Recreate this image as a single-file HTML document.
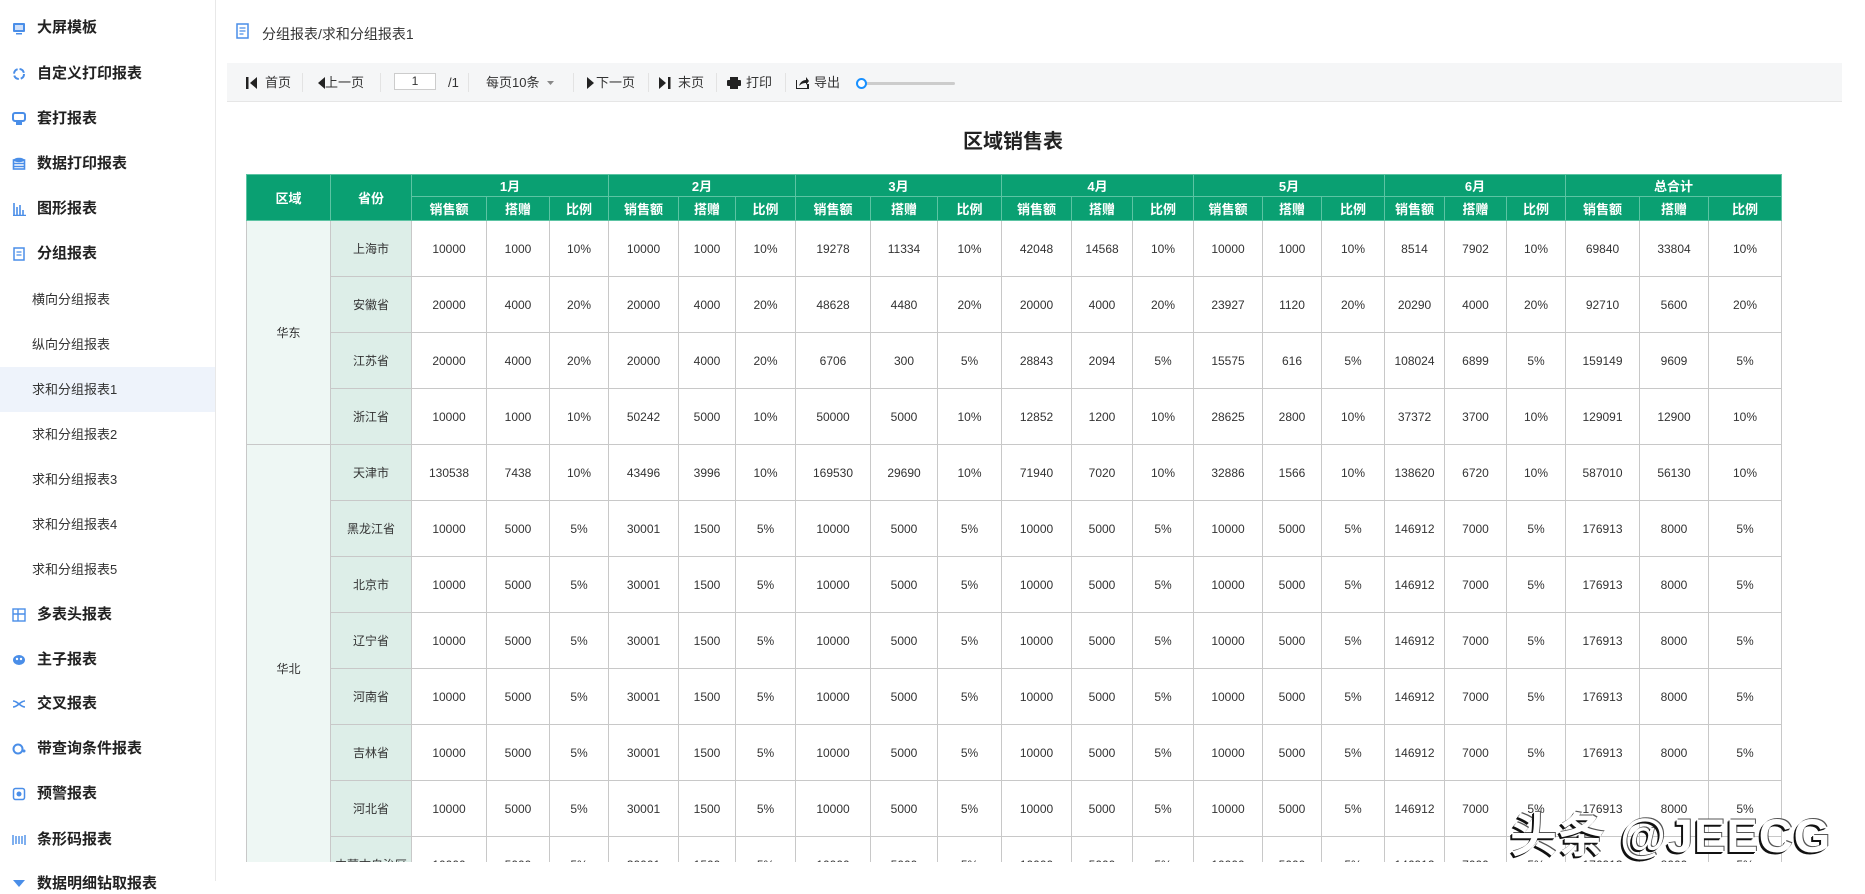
<!DOCTYPE html>
<html><head><meta charset="utf-8"><style>
*{margin:0;padding:0;box-sizing:border-box}
body{width:1865px;height:881px;overflow:hidden;background:#fff;font-family:"Liberation Sans","Noto Sans CJK SC",sans-serif;color:#333;position:relative}
.side{position:absolute;left:0;top:0;width:216px;height:881px;border-right:1px solid #e8e8e8;background:#fff}
.mi{position:absolute;left:0;width:215px;height:20px;font-size:15px;font-weight:bold;color:#222;line-height:20px}
.mi .ic{position:absolute;left:12px;top:3px;width:14px;height:14px}
.mi span{position:absolute;left:37px}
.si{position:absolute;left:0;width:215px;height:45px;font-size:13px;color:#333;line-height:45px;padding-left:32px}
.sel{background:#eef3fb}
.bc{position:absolute;left:262px;top:24px;font-size:14px;color:#333}
.tb{position:absolute;left:227px;top:63px;width:1615px;height:39px;background:#f5f6f7;border-bottom:1px solid #e6e6e6;font-size:13px;color:#333}
.tb .t{position:absolute;top:11px;line-height:17px}
.tb .sep{position:absolute;top:10px;width:1px;height:19px;background:#e3e3e3}
.title{position:absolute;left:0;width:2026px;top:125px;text-align:center;font-size:20px;font-weight:bold;color:#222}
.wrap{position:absolute;left:246px;top:174px;width:1540px;height:688px;overflow:hidden}
table{border-collapse:collapse;table-layout:fixed;width:1535px;font-size:12px}
td,th{border:1px solid #c8c8c8;text-align:center;color:#333;font-weight:normal}
th{background:#0aa072;color:#fff;font-weight:bold;font-size:13px;border-color:#5cc4a3}
.h1 th{height:22px}.h2 th{height:24px}
td{height:56px}
.r{background:#eef7f4}.p{background:#ddeee8}
.wm{position:absolute;left:1510px;top:797px;font-size:47px;color:#fff;font-weight:bold;letter-spacing:1px;text-shadow:-2px 2px 0 #111,-1px 1px 0 #111,1px -1px 0 #555}
</style></head><body>
<div class="side">
<div class="mi" style="top:18px"><svg class="ic" viewBox="0 0 14 14"><rect x="1" y="2" width="12" height="9" rx="1" fill="#4a8ee8"/><rect x="3" y="4" width="8" height="5" fill="#cfe0fa"/><rect x="4" y="12" width="6" height="1.5" fill="#4a8ee8"/></svg><span>大屏模板</span></div>
<div class="mi" style="top:64px"><svg class="ic" viewBox="0 0 14 14"><circle cx="7" cy="7" r="5" fill="none" stroke="#4a8ee8" stroke-width="2" stroke-dasharray="6 2"/></svg><span>自定义打印报表</span></div>
<div class="mi" style="top:109px"><svg class="ic" viewBox="0 0 14 14"><rect x="1" y="1" width="12" height="8" rx="2" fill="none" stroke="#4a8ee8" stroke-width="2"/><rect x="4" y="8" width="6" height="5" fill="#4a8ee8"/></svg><span>套打报表</span></div>
<div class="mi" style="top:154px"><svg class="ic" viewBox="0 0 14 14"><ellipse cx="7" cy="3" rx="5.5" ry="2.2" fill="#4a8ee8"/><rect x="1.5" y="3" width="11" height="9" fill="none" stroke="#4a8ee8" stroke-width="1.6"/><path d="M1.5 6.5h11M1.5 9.5h11" stroke="#4a8ee8" stroke-width="1.4"/></svg><span>数据打印报表</span></div>
<div class="mi" style="top:199px"><svg class="ic" viewBox="0 0 14 14"><path d="M2 1v12M5 5v8M8 3v10M11 8v5M1 13.5h13" stroke="#4a8ee8" stroke-width="1.6"/></svg><span>图形报表</span></div>
<div class="mi" style="top:244px"><svg class="ic" viewBox="0 0 14 14"><rect x="2" y="1" width="10" height="12" fill="none" stroke="#4a8ee8" stroke-width="1.5"/><path d="M4.5 5h5M4.5 8h5" stroke="#4a8ee8" stroke-width="1.3"/></svg><span>分组报表</span></div>
<div class="si" style="top:277px">横向分组报表</div>
<div class="si" style="top:322px">纵向分组报表</div>
<div class="si sel" style="top:367px">求和分组报表1</div>
<div class="si" style="top:412px">求和分组报表2</div>
<div class="si" style="top:457px">求和分组报表3</div>
<div class="si" style="top:502px">求和分组报表4</div>
<div class="si" style="top:547px">求和分组报表5</div>
<div class="mi" style="top:605px"><svg class="ic" viewBox="0 0 14 14"><rect x="1" y="1" width="12" height="12" fill="none" stroke="#4a8ee8" stroke-width="1.4"/><path d="M1 6h12M6 1v12" stroke="#4a8ee8" stroke-width="1.4"/></svg><span>多表头报表</span></div>
<div class="mi" style="top:650px"><svg class="ic" viewBox="0 0 14 14"><ellipse cx="7" cy="7" rx="6" ry="5" fill="#4a8ee8"/><circle cx="5" cy="6" r="1.2" fill="#fff"/><circle cx="9" cy="6" r="1.2" fill="#fff"/></svg><span>主子报表</span></div>
<div class="mi" style="top:694px"><svg class="ic" viewBox="0 0 14 14"><path d="M1 4c5 0 7 6 12 6M1 10c5 0 7-6 12-6" fill="none" stroke="#4a8ee8" stroke-width="1.6"/></svg><span>交叉报表</span></div>
<div class="mi" style="top:739px"><svg class="ic" viewBox="0 0 14 14"><circle cx="6" cy="7" r="4.5" fill="none" stroke="#4a8ee8" stroke-width="2"/><circle cx="12" cy="9" r="1.5" fill="#4a8ee8"/></svg><span>带查询条件报表</span></div>
<div class="mi" style="top:784px"><svg class="ic" viewBox="0 0 14 14"><rect x="1.5" y="1.5" width="11" height="11" rx="2" fill="none" stroke="#4a8ee8" stroke-width="1.5"/><circle cx="7" cy="7" r="2.5" fill="#4a8ee8"/></svg><span>预警报表</span></div>
<div class="mi" style="top:830px"><svg class="ic" viewBox="0 0 14 14"><path d="M1 2v10M4 3v8M7 3v8M10 3v8M13 2v10" stroke="#4a8ee8" stroke-width="1.4"/></svg><span>条形码报表</span></div>
<div class="mi" style="top:874px"><svg class="ic" viewBox="0 0 14 14"><path d="M1 3h12L7 10z" fill="#4a8ee8"/></svg><span>数据明细钻取报表</span></div>
</div>
<svg style="position:absolute;left:236px;top:23px" width="14" height="17" viewBox="0 0 14 17"><rect x="1" y="1" width="11" height="14" fill="none" stroke="#4a8ee8" stroke-width="1.5"/><path d="M3.5 5h6M3.5 8h6M3.5 11h4" stroke="#4a8ee8" stroke-width="1.2"/></svg>
<div class="bc">分组报表/求和分组报表1</div>
<div class="tb">
<svg style="position:absolute;left:19px;top:14px" width="12" height="12"><rect x="0" y="0" width="2.5" height="12" fill="#222"/><path d="M11 0v12L4 6z" fill="#222"/></svg>
<span class="t" style="left:38px">首页</span><div class="sep" style="left:75px"></div>
<svg style="position:absolute;left:91px;top:14px" width="8" height="12"><path d="M7 0v12L0 6z" fill="#222"/></svg>
<span class="t" style="left:98px">上一页</span><div class="sep" style="left:153px"></div>
<div style="position:absolute;left:167px;top:10px;width:42px;height:17px;background:#fff;border:1px solid #ccc;font-size:12px;text-align:center;line-height:15px">1</div>
<span class="t" style="left:221px">/1</span><div class="sep" style="left:241px"></div>
<span class="t" style="left:259px">每页10条</span>
<svg style="position:absolute;left:320px;top:18px" width="7" height="4"><path d="M0 0h7L3.5 4z" fill="#888"/></svg>
<div class="sep" style="left:346px"></div>
<svg style="position:absolute;left:360px;top:14px" width="8" height="12"><path d="M0 0v12L7 6z" fill="#222"/></svg>
<span class="t" style="left:369px">下一页</span><div class="sep" style="left:421px"></div>
<svg style="position:absolute;left:432px;top:14px" width="12" height="12"><path d="M0 0v12L7 6z" fill="#222"/><rect x="9" y="0" width="2.5" height="12" fill="#222"/></svg>
<span class="t" style="left:451px">末页</span><div class="sep" style="left:489px"></div>
<svg style="position:absolute;left:500px;top:14px" width="14" height="12"><rect x="3" y="0" width="8" height="3" fill="#222"/><rect x="0" y="3" width="14" height="6" rx="1" fill="#222"/><rect x="3" y="8" width="8" height="4" fill="#222"/></svg>
<span class="t" style="left:519px">打印</span><div class="sep" style="left:558px"></div>
<svg style="position:absolute;left:569px;top:13px" width="13" height="13"><path d="M0 4v9h12V8" fill="none" stroke="#222" stroke-width="2"/><path d="M3 10c1-4 4-6 7-6V1l3 4-3 4V7c-3 0-5 1-7 3z" fill="#222"/></svg>
<span class="t" style="left:587px">导出</span>
<div style="position:absolute;left:633px;top:19px;width:95px;height:3px;background:#ccc;border-radius:2px"></div>
<div style="position:absolute;left:629px;top:15px;width:11px;height:11px;border:2px solid #1890ff;border-radius:50%;background:#fff"></div>
</div>
<div class="title">区域销售表</div>
<div class="wrap">
<table>
<colgroup><col style="width:84px"><col style="width:81px"><col style="width:75px"><col style="width:63px"><col style="width:59px"><col style="width:70px"><col style="width:57px"><col style="width:60px"><col style="width:75px"><col style="width:67px"><col style="width:64px"><col style="width:70px"><col style="width:61px"><col style="width:61px"><col style="width:69px"><col style="width:59px"><col style="width:63px"><col style="width:60px"><col style="width:62px"><col style="width:59px"><col style="width:74px"><col style="width:69px"><col style="width:73px"></colgroup>
<tr class="h1"><th rowspan="2">区域</th><th rowspan="2">省份</th><th colspan="3">1月</th><th colspan="3">2月</th><th colspan="3">3月</th><th colspan="3">4月</th><th colspan="3">5月</th><th colspan="3">6月</th><th colspan="3">总合计</th></tr>
<tr class="h2"><th>销售额</th><th>搭赠</th><th>比例</th><th>销售额</th><th>搭赠</th><th>比例</th><th>销售额</th><th>搭赠</th><th>比例</th><th>销售额</th><th>搭赠</th><th>比例</th><th>销售额</th><th>搭赠</th><th>比例</th><th>销售额</th><th>搭赠</th><th>比例</th><th>销售额</th><th>搭赠</th><th>比例</th></tr>
<tr><td class="r" rowspan="4">华东</td><td class="p">上海市</td><td>10000</td><td>1000</td><td>10%</td><td>10000</td><td>1000</td><td>10%</td><td>19278</td><td>11334</td><td>10%</td><td>42048</td><td>14568</td><td>10%</td><td>10000</td><td>1000</td><td>10%</td><td>8514</td><td>7902</td><td>10%</td><td>69840</td><td>33804</td><td>10%</td></tr>
<tr><td class="p">安徽省</td><td>20000</td><td>4000</td><td>20%</td><td>20000</td><td>4000</td><td>20%</td><td>48628</td><td>4480</td><td>20%</td><td>20000</td><td>4000</td><td>20%</td><td>23927</td><td>1120</td><td>20%</td><td>20290</td><td>4000</td><td>20%</td><td>92710</td><td>5600</td><td>20%</td></tr>
<tr><td class="p">江苏省</td><td>20000</td><td>4000</td><td>20%</td><td>20000</td><td>4000</td><td>20%</td><td>6706</td><td>300</td><td>5%</td><td>28843</td><td>2094</td><td>5%</td><td>15575</td><td>616</td><td>5%</td><td>108024</td><td>6899</td><td>5%</td><td>159149</td><td>9609</td><td>5%</td></tr>
<tr><td class="p">浙江省</td><td>10000</td><td>1000</td><td>10%</td><td>50242</td><td>5000</td><td>10%</td><td>50000</td><td>5000</td><td>10%</td><td>12852</td><td>1200</td><td>10%</td><td>28625</td><td>2800</td><td>10%</td><td>37372</td><td>3700</td><td>10%</td><td>129091</td><td>12900</td><td>10%</td></tr>
<tr><td class="r" rowspan="8">华北</td><td class="p">天津市</td><td>130538</td><td>7438</td><td>10%</td><td>43496</td><td>3996</td><td>10%</td><td>169530</td><td>29690</td><td>10%</td><td>71940</td><td>7020</td><td>10%</td><td>32886</td><td>1566</td><td>10%</td><td>138620</td><td>6720</td><td>10%</td><td>587010</td><td>56130</td><td>10%</td></tr>
<tr><td class="p">黑龙江省</td><td>10000</td><td>5000</td><td>5%</td><td>30001</td><td>1500</td><td>5%</td><td>10000</td><td>5000</td><td>5%</td><td>10000</td><td>5000</td><td>5%</td><td>10000</td><td>5000</td><td>5%</td><td>146912</td><td>7000</td><td>5%</td><td>176913</td><td>8000</td><td>5%</td></tr>
<tr><td class="p">北京市</td><td>10000</td><td>5000</td><td>5%</td><td>30001</td><td>1500</td><td>5%</td><td>10000</td><td>5000</td><td>5%</td><td>10000</td><td>5000</td><td>5%</td><td>10000</td><td>5000</td><td>5%</td><td>146912</td><td>7000</td><td>5%</td><td>176913</td><td>8000</td><td>5%</td></tr>
<tr><td class="p">辽宁省</td><td>10000</td><td>5000</td><td>5%</td><td>30001</td><td>1500</td><td>5%</td><td>10000</td><td>5000</td><td>5%</td><td>10000</td><td>5000</td><td>5%</td><td>10000</td><td>5000</td><td>5%</td><td>146912</td><td>7000</td><td>5%</td><td>176913</td><td>8000</td><td>5%</td></tr>
<tr><td class="p">河南省</td><td>10000</td><td>5000</td><td>5%</td><td>30001</td><td>1500</td><td>5%</td><td>10000</td><td>5000</td><td>5%</td><td>10000</td><td>5000</td><td>5%</td><td>10000</td><td>5000</td><td>5%</td><td>146912</td><td>7000</td><td>5%</td><td>176913</td><td>8000</td><td>5%</td></tr>
<tr><td class="p">吉林省</td><td>10000</td><td>5000</td><td>5%</td><td>30001</td><td>1500</td><td>5%</td><td>10000</td><td>5000</td><td>5%</td><td>10000</td><td>5000</td><td>5%</td><td>10000</td><td>5000</td><td>5%</td><td>146912</td><td>7000</td><td>5%</td><td>176913</td><td>8000</td><td>5%</td></tr>
<tr><td class="p">河北省</td><td>10000</td><td>5000</td><td>5%</td><td>30001</td><td>1500</td><td>5%</td><td>10000</td><td>5000</td><td>5%</td><td>10000</td><td>5000</td><td>5%</td><td>10000</td><td>5000</td><td>5%</td><td>146912</td><td>7000</td><td>5%</td><td>176913</td><td>8000</td><td>5%</td></tr>
<tr><td class="p">内蒙古自治区</td><td>10000</td><td>5000</td><td>5%</td><td>30001</td><td>1500</td><td>5%</td><td>10000</td><td>5000</td><td>5%</td><td>10000</td><td>5000</td><td>5%</td><td>10000</td><td>5000</td><td>5%</td><td>146912</td><td>7000</td><td>5%</td><td>176913</td><td>8000</td><td>5%</td></tr>
</table>
</div>
<div class="wm">头条 @JEECG</div>
</body></html>
